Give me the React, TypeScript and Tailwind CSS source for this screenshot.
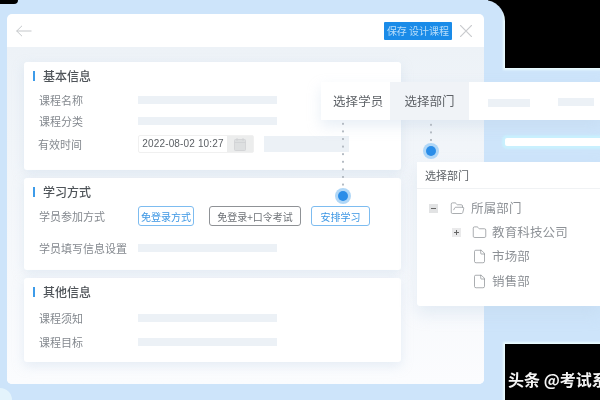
import React from 'react';
import { File, Folder, FolderOpen } from 'lucide-react';

const Bar = ({ className = 'w-[139px] h-2' }: { className?: string }) => (
  <div className={`bg-[#ecf1f6] ${className}`} />
);

const Title = ({ text }: { text: string }) => (
  <div className="flex items-center gap-2 h-4">
    <div className="w-[2px] h-[10px] bg-[#3d9be9] ml-[9px]" />
    <span className="text-[12px] font-medium text-[#4f5459] leading-4">{text}</span>
  </div>
);

const Row = ({ label, children, className = '' }: { label: string; children: React.ReactNode; className?: string }) => (
  <div className={`flex items-center pl-[15px] ${className}`}>
    <span className="w-[99px] shrink-0 text-[11px] text-[#84898f] leading-4">{label}</span>
    {children}
  </div>
);

const Choice = ({ text, active, className }: { text: string; active?: boolean; className: string }) => (
  <div
    className={`h-5 flex items-center justify-center rounded-[3px] border-[1.5px] text-[10px] ${
      active ? 'border-[#7dbcf0] text-[#3d97e4]' : 'border-[#8f9296] text-[#6e7277]'
    } ${className}`}
  >
    {text}
  </div>
);

const Dot = ({ className }: { className: string }) => (
  <div className={`absolute w-4 h-4 rounded-full bg-[#b0d7f7] flex items-center justify-center ${className}`}>
    <div className="w-[10px] h-[10px] rounded-full bg-[#2a8de8]" />
  </div>
);

const Dotted = ({ className }: { className: string }) => (
  <div
    className={`absolute w-[4px] bg-[radial-gradient(circle,#b4bbc3_1px,transparent_1.4px)] bg-[length:4px_7.6px] ${className}`}
  />
);

const TreeRow = ({ children, text, className = '' }: { children: React.ReactNode; text: string; className?: string }) => (
  <div className={`flex items-center h-6 ${className}`}>
    {children}
    <span className="text-[12.5px] text-[#8d9196] tracking-[0.15px]">{text}</span>
  </div>
);

export default function App() {
  return (
    <div className="relative w-[600px] h-[400px] overflow-hidden bg-[#cde4fa] pl-[7px] pt-[14px] blur-[0.5px] font-['Noto_Sans_CJK_SC','Liberation_Sans',sans-serif]">
      {/* main window */}
      <div className="flex flex-col w-[477px] h-[370px] rounded-[5px] overflow-hidden bg-white">
        <div className="h-[33px] shrink-0 flex items-center justify-between pl-[9px] pr-[12px]">
          <svg width="16" height="12" viewBox="0 0 16 12" fill="none" stroke="#c4c7ca" strokeWidth="1">
            <path d="M0.5 6H15.5M6 0.8L0.7 6L6 11.2" />
          </svg>
          <div className="flex items-center gap-2">
            <div className="w-[68px] h-[18px] bg-[#1a8be8] rounded-[1px] flex items-center justify-center text-[10px] text-[#b9defa] whitespace-pre">
              保存 设计课程
            </div>
            <svg width="12" height="12" viewBox="0 0 12 12" stroke="#c9cbce" strokeWidth="1.2">
              <path d="M0 0L12 12M12 0L0 12" />
            </svg>
          </div>
        </div>

        <div className="flex-1 flex flex-col gap-2 pl-[17px] pt-[15px] bg-gradient-to-b from-[#edf2f7] to-[#fbfcfe]">
          <div className="w-[377px] h-[108px] bg-white rounded-[3px] shadow-[0_4px_12px_rgba(190,210,230,0.35)] pt-[6px]">
            <Title text="基本信息" />
            <Row label="课程名称" className="mt-[8px]"><Bar /></Row>
            <Row label="课程分类" className="mt-[5px]"><Bar /></Row>
            <div className="flex items-center pl-[14px] mt-[6px]">
              <span className="w-[100px] shrink-0 text-[11px] text-[#84898f] leading-4">有效时间</span>
              <div className="flex h-[18px] w-[116px] rounded-[2px] border border-[#f0f0f0]">
                <span className="w-[88px] text-[10px] tracking-[0.15px] text-[#5b5f64] leading-4 text-center font-['Liberation_Sans',sans-serif]">
                  2022-08-02 10:27
                </span>
                <div className="flex-1 bg-[#eceded] flex items-center justify-center">
                  <svg width="12" height="13" viewBox="0 0 12 13" fill="#dddfe0" stroke="#cfd1d3" strokeWidth="0.8">
                    <rect x="0.5" y="1.5" width="11" height="11" rx="1" />
                    <path d="M3 0V3M9 0V3M0.5 4.5H11.5" />
                  </svg>
                </div>
              </div>
              <Bar className="w-[85px] h-4 ml-[10px]" />
            </div>
          </div>

          <div className="w-[377px] h-[92px] bg-white rounded-[3px] shadow-[0_4px_12px_rgba(190,210,230,0.35)] pt-[6px]">
            <Title text="学习方式" />
            <Row label="学员参加方式" className="mt-[6px]">
              <Choice text="免登录方式" active className="w-[56px]" />
              <Choice text="免登录+口令考试" className="w-[92px] ml-[15px]" />
              <Choice text="安排学习" active className="w-[59px] ml-[10px]" />
            </Row>
            <Row label="学员填写信息设置" className="mt-[14px]"><Bar /></Row>
          </div>

          <div className="w-[377px] h-[84px] bg-white rounded-[3px] shadow-[0_4px_12px_rgba(190,210,230,0.35)] pt-[6px]">
            <Title text="其他信息" />
            <Row label="课程须知" className="mt-[10px]"><Bar /></Row>
            <Row label="课程目标" className="mt-2"><Bar /></Row>
          </div>
        </div>
      </div>

      {/* floating tab strip */}
      <div className="absolute left-[321px] top-[82px] w-[279px] h-[38px] flex bg-white shadow-[0_6px_14px_rgba(190,210,230,0.35)]">
        <div className="w-[69px] pl-[12px] flex items-center text-[12.5px] tracking-[0.1px] text-[#5e6267]">选择学员</div>
        <div className="w-[79px] flex items-center justify-center text-[12.5px] text-[#5e6267] bg-[#f0f3f7]">选择部门</div>
        <Bar className="w-[42px] h-2 ml-[19px] mt-[17px]" />
        <Bar className="w-[36px] h-2 ml-[28px] mt-[16px]" />
      </div>

      <Dotted className="left-[341px] top-[120px] h-[68px]" />
      <Dotted className="left-[429px] top-[121px] h-[23px]" />
      <Dot className="left-[335px] top-[188px]" />
      <Dot className="left-[423px] top-[143px]" />

      {/* department picker */}
      <div className="absolute left-[417px] top-[162px] w-[183px] h-[144px] bg-white rounded-bl-[3px] shadow-[0_8px_16px_rgba(190,210,230,0.35)]">
        <div className="h-[27px] pl-2 flex items-center border-b border-[#f0f2f4] text-[11px] text-[#5e6267]">选择部门</div>
        <div className="flex flex-col pt-[6px]">
          <TreeRow text="所属部门" className="pl-[12px] mt-[1px]">
            <div className="w-[9px] h-[9px] bg-[#e2e3e4] flex items-center justify-center mr-[12px]">
              <div className="w-[5px] h-px bg-[#666]" />
            </div>
            <FolderOpen size={15} strokeWidth={1.1} className="text-[#85898d] mr-[6px]" />
          </TreeRow>
          <TreeRow text="教育科技公司" className="pl-[35px]">
            <div className="relative w-[9px] h-[9px] bg-[#eaeaeb] flex items-center justify-center mr-[11px]">
              <div className="w-[5px] h-px bg-[#666]" />
              <div className="absolute w-px h-[5px] bg-[#666]" />
            </div>
            <Folder size={15} strokeWidth={1.1} className="text-[#85898d] mr-[5px]" />
          </TreeRow>
          <TreeRow text="市场部" className="pl-[55px]">
            <File size={15} strokeWidth={1.1} className="text-[#85898d] mr-[5px]" />
          </TreeRow>
          <TreeRow text="销售部" className="pl-[55px] mt-[1px]">
            <File size={15} strokeWidth={1.1} className="text-[#85898d] mr-[5px]" />
          </TreeRow>
        </div>
      </div>

      {/* leftover bar of the cropped picture */}
      <div className="absolute left-[505px] top-[138px] w-[95px] h-2 bg-white rounded-l-[2px] shadow-[0_0_2px_3px_rgba(200,245,255,0.7)]" />

      {/* transparent corners of the picture, shown black */}
      <div className="absolute left-[505px] top-0 w-[95px] h-[68px] bg-black shadow-[0_0_2px_2px_rgba(235,252,255,0.95)]" />
      <div className="absolute left-[484px] top-0 w-[21px] h-[26px] rounded-tr-[21px] shadow-[6px_-6px_0_2px_#000]" />
      <div className="absolute left-[505px] top-[344px] w-[95px] h-[56px] bg-black overflow-hidden shadow-[0_0_2px_2px_rgba(235,252,255,0.95)]">
        <span className="absolute left-[3px] top-[25px] whitespace-nowrap text-[16px] leading-5 font-bold text-[#f4f4f4]">
          头条 @考试系统
        </span>
      </div>
      <div className="absolute left-0 top-0 w-[18px] h-[4px] bg-black rounded-br-[18px]" />
      <div className="absolute left-0 bottom-0 w-[12px] h-[12px] bg-[#e3f3fc] rounded-tr-full" />
    </div>
  );
}
